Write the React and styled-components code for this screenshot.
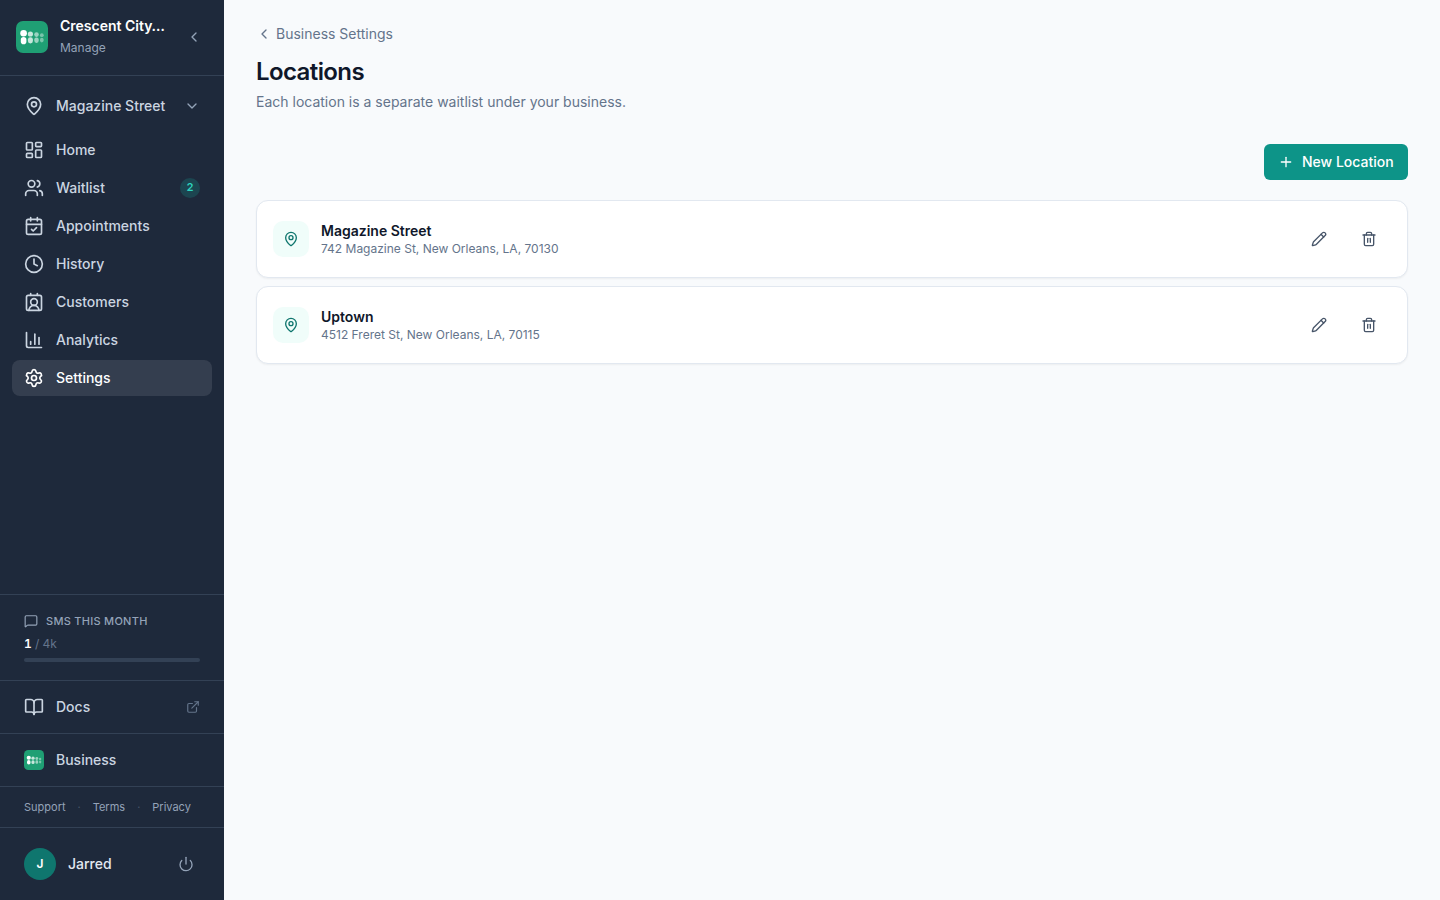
import React from 'react';
import styled, { createGlobalStyle } from 'styled-components';
import {
  MapPin, ChevronDown, ChevronLeft, LayoutDashboard, Users, CalendarCheck, Clock, MessageSquare,
  ContactRound, ChartColumn, Settings, BookOpen, ExternalLink, Power, Plus, Pencil, Trash2,
} from 'lucide-react';

const GlobalStyle = createGlobalStyle`
  *, *::before, *::after { box-sizing: border-box; }
  body { margin: 0; background: #f8fafc; font-family: Inter, "Liberation Sans", sans-serif; color: #0f172a; }
  button { font: inherit; border: 0; padding: 0; background: none; cursor: pointer; }
  a { color: inherit; text-decoration: none; }
  h1, p { margin: 0; }
  svg { display: block; flex-shrink: 0; }
`;

const Shell = styled.div`display: flex; height: 100vh;`;

const Sidebar = styled.aside`
  display: flex;
  flex-direction: column;
  width: 224px;
  flex-shrink: 0;
  background: #1e293b;
  color: #cbd5e1;
`;

const Brand = styled.header`
  display: flex;
  align-items: center;
  gap: 12px;
  height: 76px;
  padding: 0 22px 1px 16px;
  border-bottom: 1px solid #334155;
`;

const BrandText = styled.div`
  flex: 1;
  min-width: 0;
  padding-bottom: 3px;
`;

const BrandName = styled.div`
  font-size: 14px;
  font-weight: 600;
  line-height: 20px;
  color: #fff;
  white-space: nowrap;
`;

const BrandMode = styled.div`
  margin-top: 4px;
  font-size: 12px;
  line-height: 16px;
  color: #94a3b8;
`;

const CollapseButton = styled.button`
  display: grid;
  place-items: center;
  width: 16px;
  height: 16px;
  color: #94a3b8;
`;

const Nav = styled.nav`
  flex: 1;
  display: flex;
  flex-direction: column;
  gap: 2px;
  padding: 12px;
`;

const NavItem = styled.a`
  display: flex;
  align-items: center;
  gap: 12px;
  height: 36px;
  padding: 0 12px;
  margin-bottom: ${({ $spaced }) => ($spaced ? '6px' : '0')};
  border-radius: 8px;
  font-size: 14px;
  font-weight: 500;
  line-height: 20px;
  color: ${({ $active }) => ($active ? '#fff' : '#cbd5e1')};
  background: ${({ $active }) => ($active ? 'rgba(255, 255, 255, 0.1)' : 'transparent')};
`;

const NavLabel = styled.span`flex: 1; white-space: nowrap;`;

const Badge = styled.span`
  display: grid;
  place-items: center;
  min-width: 20px;
  height: 20px;
  border-radius: 10px;
  padding-bottom: 2px;
  background: rgba(20, 184, 166, 0.2);
  color: #2dd4bf;
  font-size: 11px;
  font-weight: 600;
  line-height: 16px;
  font-variant-numeric: tabular-nums;
`;

const Trailing = styled.span`color: ${({ $dim }) => ($dim ? '#64748b' : '#94a3b8')};`;

const Section = styled.div`
  padding: 8px 12px;
  border-top: 1px solid #334155;
`;

const Usage = styled.div`
  height: 86px;
  padding: 18px 24px 0;
  border-top: 1px solid #334155;
`;

const UsageTitle = styled.div`
  display: flex;
  align-items: center;
  gap: 8px;
  font-size: 11px;
  font-weight: 500;
  line-height: 16px;
  letter-spacing: 0.275px;
  text-transform: uppercase;
  color: #94a3b8;
`;

const UsageValue = styled.div`
  margin-top: 5px;
  font-size: 12px;
  line-height: 20px;
  color: #64748b;
  font-variant-numeric: tabular-nums;
  strong { font-weight: 600; color: #fff; }
`;

const UsageTrack = styled.div`
  height: 4px;
  margin-top: 4px;
  border-radius: 2px;
  background: #334155;
`;

const FooterLinks = styled.div`
  display: flex;
  gap: 12px;
  padding: 12px 24px;
  border-top: 1px solid #334155;
  font-size: 11px;
  line-height: 16px;
  color: #94a3b8;
`;

const Dot = styled.span`color: #475569;`;

const Account = styled.div`
  display: flex;
  align-items: center;
  gap: 12px;
  height: 73px;
  padding: 0 30px 0 24px;
  border-top: 1px solid #334155;
  color: #94a3b8;
`;

const Avatar = styled.span`
  display: grid;
  place-items: center;
  width: 32px;
  height: 32px;
  padding-bottom: 1px;
  border-radius: 50%;
  background: #0f766e;
  color: #fff;
  font-size: 12px;
  font-weight: 600;
`;

const AccountName = styled.span`
  flex: 1;
  font-size: 14px;
  font-weight: 500;
  line-height: 20px;
  color: #e2e8f0;
`;

const Main = styled.main`
  flex: 1;
  min-width: 0;
  padding: 24px 32px;
`;

const BackLink = styled.a`
  display: flex;
  align-items: center;
  gap: 4px;
  font-size: 14px;
  line-height: 20px;
  color: #64748b;
`;

const Title = styled.h1`
  margin-top: 12px;
  font-size: 24px;
  font-weight: 600;
  line-height: 32px;
  letter-spacing: -0.6px;
`;

const Subtitle = styled.p`
  margin-top: 4px;
  font-size: 14px;
  line-height: 20px;
  color: #64748b;
`;

const Toolbar = styled.div`
  display: flex;
  justify-content: flex-end;
  margin: 32px 0 20px;
`;

const PrimaryButton = styled.button`
  && {
    display: flex;
    align-items: center;
    gap: 8px;
    width: 144px;
    height: 36px;
    padding: 0 14px;
    border-radius: 6px;
    background: #0d9488;
    color: #fff;
    font-size: 14px;
    font-weight: 500;
    line-height: 20px;
    white-space: nowrap;
  }
`;

const LocationList = styled.div`
  display: flex;
  flex-direction: column;
  gap: 8px;
`;

const LocationCard = styled.article`
  display: flex;
  align-items: center;
  gap: 12px;
  padding: 16px;
  border: 1px solid #e2e8f0;
  border-radius: 12px;
  background: #fff;
  box-shadow: 0 1px 2px rgba(0, 0, 0, 0.05);
`;

const LocationIcon = styled.div`
  display: grid;
  place-items: center;
  width: 36px;
  height: 36px;
  border-radius: 10px;
  background: #f0fdfa;
  color: #0f766e;
`;

const LocationInfo = styled.div`flex: 1;`;

const LocationName = styled.div`
  font-size: 14px;
  font-weight: 600;
  line-height: 20px;
`;

const LocationAddress = styled.div`
  font-size: 12px;
  line-height: 16px;
  color: #64748b;
`;

const Actions = styled.div`display: flex; gap: 6px;`;

const IconButton = styled.button`
  display: grid;
  place-items: center;
  width: 44px;
  height: 44px;
  color: #475569;
`;

const Logo = ({ size }) => (
  <svg width={size} height={size} viewBox="0 0 32 32" fill="#fff">
    <rect width="32" height="32" rx="7" fill="#1f9f74" />
    <circle cx="7.6" cy="12.3" r="3.3" />
    <rect x="4.8" y="15.9" width="5.6" height="7.3" rx="2.8" />
    <g opacity="0.75">
      <circle cx="14.4" cy="13" r="2.6" />
      <rect x="11.9" y="16.2" width="5" height="6.2" rx="2.4" />
    </g>
    <g opacity="0.55">
      <circle cx="20.5" cy="13.6" r="2.3" />
      <rect x="18.3" y="16.5" width="4.4" height="5.4" rx="2.1" />
    </g>
    <g opacity="0.4">
      <circle cx="25.8" cy="14.2" r="1.9" />
      <rect x="24" y="16.8" width="3.6" height="4.6" rx="1.8" />
    </g>
  </svg>
);

const navItems = [
  { label: 'Home', icon: LayoutDashboard },
  { label: 'Waitlist', icon: Users, count: 2 },
  { label: 'Appointments', icon: CalendarCheck },
  { label: 'History', icon: Clock },
  { label: 'Customers', icon: ContactRound },
  { label: 'Analytics', icon: ChartColumn },
  { label: 'Settings', icon: Settings, active: true },
];

const locations = [
  { name: 'Magazine Street', address: '742 Magazine St, New Orleans, LA, 70130' },
  { name: 'Uptown', address: '4512 Freret St, New Orleans, LA, 70115' },
];

export default function App() {
  return (
    <Shell>
      <GlobalStyle />
      <Sidebar>
        <Brand>
          <Logo size={32} />
          <BrandText>
            <BrandName>Crescent City…</BrandName>
            <BrandMode>Manage</BrandMode>
          </BrandText>
          <CollapseButton aria-label="Collapse sidebar"><ChevronLeft size={16} /></CollapseButton>
        </Brand>
        <Nav>
          <NavItem $spaced>
            <MapPin size={20} />
            <NavLabel>Magazine Street</NavLabel>
            <Trailing><ChevronDown size={16} /></Trailing>
          </NavItem>
          {navItems.map(({ label, icon: Icon, count, active }) => (
            <NavItem key={label} $active={active}>
              <Icon size={20} />
              <NavLabel>{label}</NavLabel>
              {count && <Badge>{count}</Badge>}
            </NavItem>
          ))}
        </Nav>
        <Usage>
          <UsageTitle><MessageSquare size={14} />SMS this month</UsageTitle>
          <UsageValue><strong>1</strong> / 4k</UsageValue>
          <UsageTrack />
        </Usage>
        <Section>
          <NavItem>
            <BookOpen size={20} />
            <NavLabel>Docs</NavLabel>
            <Trailing $dim><ExternalLink size={14} /></Trailing>
          </NavItem>
        </Section>
        <Section>
          <NavItem>
            <Logo size={20} />
            <NavLabel>Business</NavLabel>
          </NavItem>
        </Section>
        <FooterLinks>
          <a>Support</a><Dot>·</Dot><a>Terms</a><Dot>·</Dot><a>Privacy</a>
        </FooterLinks>
        <Account>
          <Avatar>J</Avatar>
          <AccountName>Jarred</AccountName>
          <Power size={16} />
        </Account>
      </Sidebar>
      <Main>
        <BackLink><ChevronLeft size={16} />Business Settings</BackLink>
        <Title>Locations</Title>
        <Subtitle>Each location is a separate waitlist under your business.</Subtitle>
        <Toolbar>
          <PrimaryButton><Plus size={16} />New Location</PrimaryButton>
        </Toolbar>
        <LocationList>
          {locations.map(({ name, address }) => (
            <LocationCard key={name}>
              <LocationIcon><MapPin size={16} /></LocationIcon>
              <LocationInfo>
                <LocationName>{name}</LocationName>
                <LocationAddress>{address}</LocationAddress>
              </LocationInfo>
              <Actions>
                <IconButton aria-label="Edit"><Pencil size={16} /></IconButton>
                <IconButton aria-label="Delete"><Trash2 size={16} /></IconButton>
              </Actions>
            </LocationCard>
          ))}
        </LocationList>
      </Main>
    </Shell>
  );
}
